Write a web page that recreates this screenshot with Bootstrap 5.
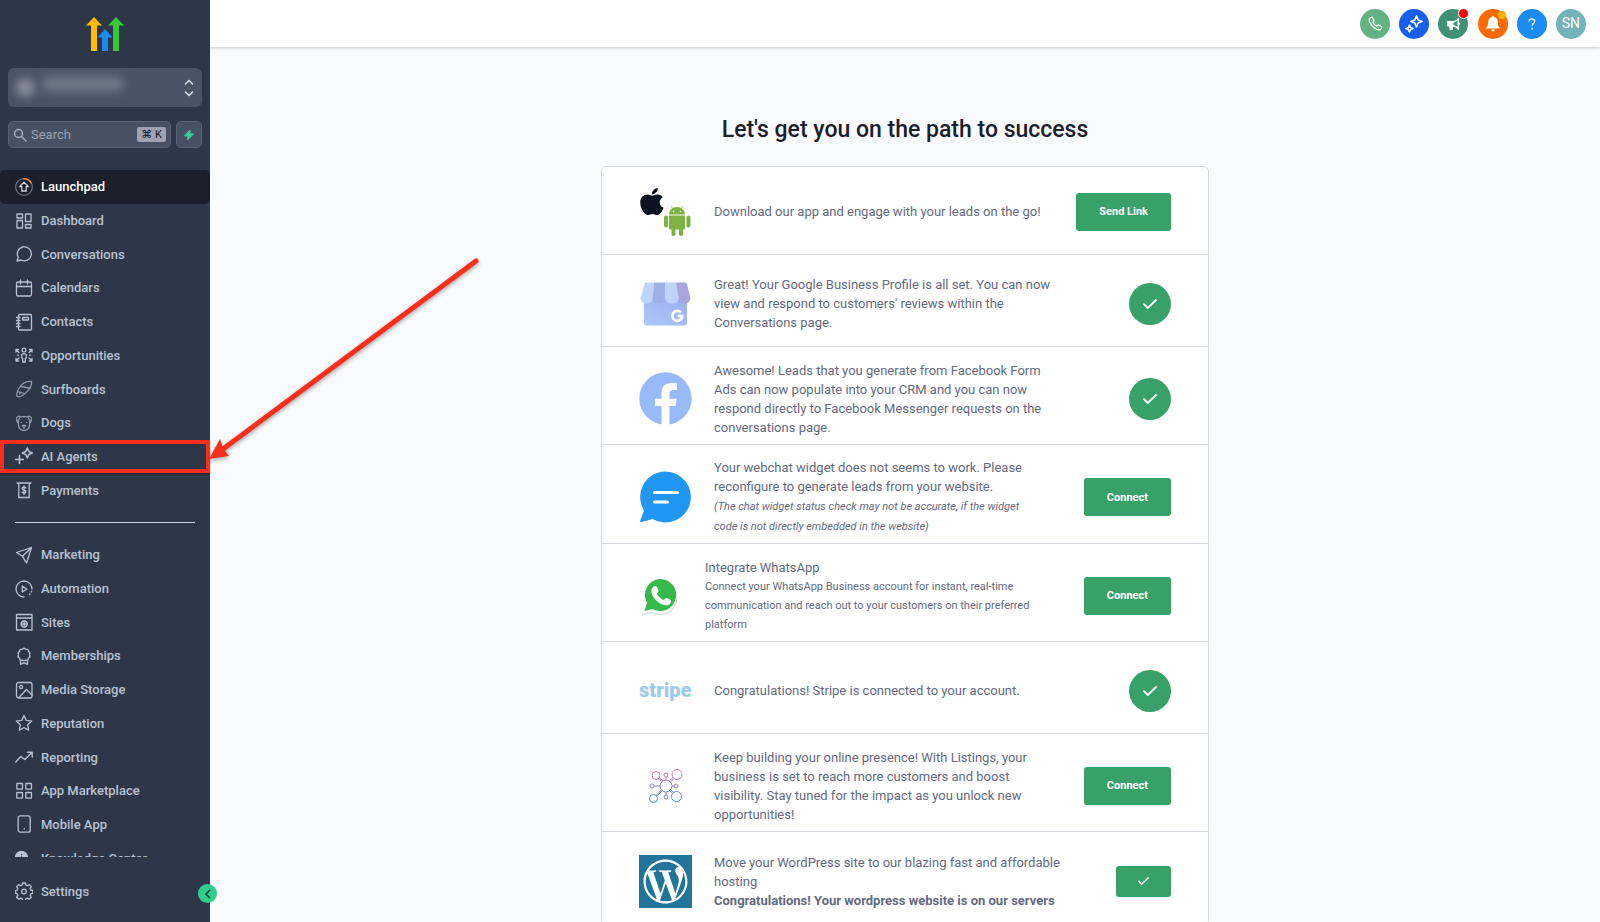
<!DOCTYPE html>
<html lang="en">
<head>
<meta charset="utf-8">
<meta name="viewport" content="width=device-width, initial-scale=1">
<title>Launchpad</title>
<link href="https://cdn.jsdelivr.net/npm/bootstrap@5.3.0/dist/css/bootstrap.min.css" rel="stylesheet">
<style>
  body { font-family: Roboto, "Liberation Sans", sans-serif; font-size: 13px; line-height: 19px; background: #f9fbfd; color: #636a80; }
  svg { display: block; flex: none; }

  /* sidebar */
  .side { width: 210px; flex: none; background: #2d3748; z-index: 10; }
  .brand-row { padding: 17px 0; }
  .account { height: 39px; flex: none; margin: 0 8px; border: 0; border-radius: 6px; background: #4a5464; color: #e2e6ec; padding: 0 8px; }
  .blur-dot { width: 19px; height: 19px; border-radius: 50%; background: #858c97; filter: blur(4px); }
  .blur-line { width: 80px; height: 14px; background: #727a87; filter: blur(5px); }
  .search-row { padding: 0 8px; margin: 14px 0 22px; gap: 5px; }
  .search-box, .bolt { height: 27px; background: #475161; border: 1px solid #596373; border-radius: 5px; }
  .search-box { padding: 0 4px; gap: 4px; min-width: 0; color: #a7afbb; }
  .search-box input { min-width: 0; width: 60px; background: transparent; border: 0; outline: 0; padding: 0; color: #fff; }
  .search-box input::placeholder { color: #9aa3b1; opacity: 1; }
  .search-box kbd { background: #9da4af; color: #10151f; border-radius: 2px; padding: 0 4px; font: 11px/15px Roboto, "DejaVu Sans", sans-serif; white-space: nowrap; }
  .bolt { width: 26px; color: #34d399; padding: 0; }
  .menu { height: 337px; flex: none; }
  .menu li { min-height: 0; }
  .side-link { padding: 0 15px; gap: 8px; color: #b9c3d1; font-weight: 500; text-decoration: none; }
  .side-link:hover { color: #fff; }
  .side-link svg { width: 18px; height: 18px; fill: none; stroke: currentColor; stroke-width: 1.3; stroke-linecap: round; stroke-linejoin: round; }
  .side-link.current { background: #1a202c; color: #fff; border-radius: 5px; }
  .rule { height: 1px; flex: none; margin: 15px; background: #cbd5e0; }
  .side-foot { padding: 17px 0 14px; }
  .side-foot .side-link { height: 34px; }
  .collapse-btn { width: 19px; height: 19px; right: -7px; bottom: 19px; border: 0; border-radius: 50%; background: #2fcf8f; color: #14432f; padding: 0; }
  .marker { inset: 0; border: 4px solid #fa2e1c; box-shadow: 0 1px 2px rgba(0,0,0,.35); pointer-events: none; }
  .pointer-arrow { left: 100%; bottom: 0; pointer-events: none; filter: drop-shadow(0 2px 2px rgba(0,0,0,.35)); }

  /* top bar */
  .topbar { height: 47px; flex: none; background: #fff; box-shadow: 0 1px 3px rgba(0,0,0,.2); padding: 0 14px; z-index: 2; }
  .tools { width: 226px; }
  .tool { width: 30px; height: 30px; border: 0; border-radius: 50%; color: #fff; padding: 0; font-size: 14px; }
  .dot-red { width: 11px; height: 11px; top: -1px; right: -1px; border-radius: 50%; background: #f00; border: 1px solid #fff; }
  .dot-amber { width: 8px; height: 8px; top: 2px; right: 2px; border-radius: 50%; background: #ffb400; }

  /* launchpad */
  .stage { overflow: auto; scrollbar-width: none; }
  .stage::-webkit-scrollbar { display: none; }
  .stage h1 { margin: 68px 0 21px; font-size: 23px; line-height: 30px; font-weight: 500; color: #1a202c; }
  .steps { max-width: 608px; background: #fff; border: 1px solid #d5dae1; border-radius: 5px; }
  .step { min-height: 98px; padding: 7px 37px 1px; border-bottom: 1px solid #d5dae1; gap: 22px; }
  .step.short { min-height: 92px; }
  .step.first { min-height: 88px; padding-top: 3px; }
  .step.tall { min-height: 99px; }
  .step:last-child { border-bottom: 0; }
  .pic { width: 53px; flex: none; }
  .copy { max-width: 342px; }
  .copy.slim { max-width: 325px; }
  .copy.wide { max-width: 356px; }
  .copy.near { margin-left: -9px; }
  .fine { font-size: 11px; }
  .go { background: #38a169; color: #fff; border: 0; border-radius: 3px; font-size: 11px; font-weight: 700; height: 38px; padding: 0 23px; white-space: nowrap; }
  .go.tick { height: 31px; padding: 0 22px; }
  .done { width: 42px; height: 42px; border-radius: 50%; background: #38a169; color: #fff; flex: none; }
  .stripe-word { font-size: 20px; font-weight: 900; color: #9ccbee; }
</style>
</head>
<body>
<div class="d-flex vh-100 overflow-hidden">

  <nav class="side d-flex flex-column position-relative" aria-label="Main">
    <div class="brand-row d-flex justify-content-center">
      <svg width="38" height="34" viewBox="0 0 38 34" role="img" aria-label="Logo">
        <path fill="#ffbc00" d="M8 0l8 8.500h-5V34H5V8.500H0z"/>
        <path fill="#37ca37" d="M30 0l8 8.500h-5V34h-6V8.500h-5z"/>
        <path fill="#188bf6" d="M19 12l7.500 8.500h-4.500V34h-6V20.500h-4.500z"/>
      </svg>
    </div>
    <button class="account d-flex align-items-center gap-2" type="button" aria-label="Switch account">
      <span class="blur-dot"></span><span class="blur-line mb-2"></span>
      <svg class="ms-auto" width="10" height="18" viewBox="0 0 10 18" fill="none" stroke="currentColor" stroke-width="1.400" stroke-linecap="round"><path d="M1.500 5L5 1.500 8.500 5M1.500 13L5 16.500 8.500 13"/></svg>
    </button>
    <div class="search-row d-flex">
      <label class="search-box d-flex align-items-center flex-grow-1">
        <svg width="14" height="14" viewBox="0 0 14 14" fill="none" stroke="currentColor" stroke-width="1.500" stroke-linecap="round"><circle cx="5.500" cy="5.500" r="4"/><path d="M8.500 8.500L13 13"/></svg>
        <input class="flex-grow-1" type="text" placeholder="Search" aria-label="Search">
        <kbd>⌘ K</kbd>
      </label>
      <button class="bolt d-flex align-items-center justify-content-center" type="button" aria-label="Quick actions">
        <svg width="12" height="12" viewBox="0 0 12 12"><path fill="currentColor" stroke="currentColor" stroke-linejoin="round" d="M7 1L1.500 7H5l-.5 4L10.500 5H7z"/></svg>
      </button>
    </div>

    <ul class="menu list-unstyled d-flex flex-column m-0">
      <li class="flex-fill d-flex"><a class="side-link current d-flex align-items-center w-100" href="#"><svg viewBox="0 0 18 18"><circle cx="9" cy="9" r="8.300" stroke="#6b7280"/><path stroke="#ed8936" stroke-width="1.500" d="M9 .7a8.300 8.300 0 0 1 7.200 4.200"/><path d="M9 4.200l4.500 4.500h-2.300V13H6.800V8.700H4.500z" stroke="#cbd5e0"/></svg>Launchpad</a></li>
      <li class="flex-fill d-flex"><a class="side-link d-flex align-items-center w-100" href="#"><svg viewBox="0 0 18 18"><path d="M2 2h5.500v4H2zM2 8.500h5.500V16H2zM10.500 2H16v7.500h-5.500zM10.500 12.500H16V16h-5.500z"/></svg>Dashboard</a></li>
      <li class="flex-fill d-flex"><a class="side-link d-flex align-items-center w-100" href="#"><svg viewBox="0 0 18 18"><path d="M2 16l1.200-3.800A7 7 0 1 1 6 15z"/></svg>Conversations</a></li>
      <li class="flex-fill d-flex"><a class="side-link d-flex align-items-center w-100" href="#"><svg viewBox="0 0 18 18"><rect x="1.500" y="3" width="15" height="14" rx="1.500"/><path d="M1.500 7.500h15M5.500 1v4M12.500 1v4"/></svg>Calendars</a></li>
      <li class="flex-fill d-flex"><a class="side-link d-flex align-items-center w-100" href="#"><svg viewBox="0 0 18 18"><rect x="3.500" y="1.500" width="13" height="15.500" rx="1.200"/><rect x="7.500" y="4.500" width="6" height="2.500" rx=".6"/><path d="M1.500 4.500h3.500M1.500 7.500h3.500M1.500 10.500h3.500M1.500 13.500h3.500"/></svg>Contacts</a></li>
      <li class="flex-fill d-flex"><a class="side-link d-flex align-items-center w-100" href="#"><svg viewBox="0 0 18 18"><circle cx="9" cy="4" r="1.900"/><path d="M6.800 8.500q2.200-1.600 4.400 0v3.500l-.9.500V16H7.700v-3.500l-.9-.5zM1 6V3.500h2.500M1.200 3.700L4 6.500M1 12.500V15h2.500M1.200 14.800L4 12M17 6V3.500h-2.500M16.800 3.700L14 6.500M17 12.500V15h-2.500M16.800 14.800L14 12M2.500 9.200h1M14.500 9.200h1"/></svg>Opportunities</a></li>
      <li class="flex-fill d-flex"><a class="side-link d-flex align-items-center w-100" href="#"><svg viewBox="0 0 18 18" opacity=".7"><path d="M16.500 1.500C10 .5 6 4.500 3.500 9 2 12 .8 15 2.200 16.300c1.600 1.300 4.800-.3 7.800-2.800 5-4 7-8 6.500-12zM5.500 6.500l9 1.500M2.500 11.500l7 2M4.500 13.800l2-1.500"/></svg>Surfboards</a></li>
      <li class="flex-fill d-flex"><a class="side-link d-flex align-items-center w-100" href="#"><svg viewBox="0 0 18 18" opacity=".7"><path d="M5.500 3q3.500-1 7 0M5.500 3C4 1.500 2 2.500 1.500 4.500L2.200 8l1.500 1M12.500 3c1.500-1.500 3.500-.5 4 1.500L15.800 8l-1.500 1M5.500 3L3.500 6v5.500c0 2.500 2.500 5 5.500 5s5.500-2.500 5.500-5V6l-2-3M7.300 11.500L9 13l1.700-1.500zM9 13v1.500"/><path d="M6.300 8.300h.2M11.500 8.300h.2"/></svg>Dogs</a></li>
      <li class="flex-fill d-flex position-relative">
        <a class="side-link d-flex align-items-center w-100" href="#"><svg viewBox="0 0 18 18"><path stroke-width="1.500" d="M12.300 1l1.500 3.500L17.300 6l-3.500 1.500-1.500 3.500-1.500-3.500L7.300 6l3.500-1.500zM4.500 8.500v8M.7 12.500h7.600"/></svg>AI Agents</a>
        <span class="marker position-absolute"></span>
        <svg class="pointer-arrow position-absolute" width="272" height="216" viewBox="0 0 272 216" aria-hidden="true"><path d="M266 4L13 192" stroke="#fa2e1c" stroke-width="5" stroke-linecap="round"/><path fill="#fa2e1c" d="M-1 202L10 182l3 9 6 8z"/></svg>
      </li>
      <li class="flex-fill d-flex"><a class="side-link d-flex align-items-center w-100" href="#"><svg viewBox="0 0 18 18"><path d="M2 2h14M3.800 2v14.500h10.400V2M10.800 6.800q-1.800-1.300-3.200-.3c-1.300 1.200.2 2.300 1.400 2.500 1.500.2 2.600 1.500 1.400 2.600-1.200.8-2.400.4-3.300-.4M9 5v8.500"/></svg>Payments</a></li>
    </ul>
    <div class="rule"></div>
    <div class="flex-grow-1 overflow-hidden">
      <ul class="menu list-unstyled d-flex flex-column m-0">
        <li class="flex-fill d-flex"><a class="side-link d-flex align-items-center w-100" href="#"><svg viewBox="0 0 18 18"><path d="M16.500 1.500L1.500 6.500l6 3.800 4 6.700zM16.500 1.500l-9 8.800"/></svg>Marketing</a></li>
        <li class="flex-fill d-flex"><a class="side-link d-flex align-items-center w-100" href="#"><svg viewBox="0 0 18 18"><path d="M9 17A8 8 0 1 1 17 9M14.500 14.500l.5-.5M16.300 12l.3-.7M7.300 6v6l4.500-3z"/></svg>Automation</a></li>
        <li class="flex-fill d-flex"><a class="side-link d-flex align-items-center w-100" href="#"><svg viewBox="0 0 18 18"><path d="M1.500 1.500h15.500v15.500H1.500zM1.500 5h15.500"/><circle cx="9.200" cy="11" r="3"/><path d="M6.200 11h6M9.200 8v6"/></svg>Sites</a></li>
        <li class="flex-fill d-flex"><a class="side-link d-flex align-items-center w-100" href="#"><svg viewBox="0 0 18 18"><path d="M9 1l1.700 1.200 2.100.1.700 2L15 5.700l-.5 2 .5 2-1.500 1.300-.7 2-2.100.1L9 14l-1.700-.9-2.100-.1-.7-2L3 9.700l.5-2-.5-2 1.500-1.400.7-2 2.100-.1zM5.500 13v4.300L9 15.800l3.500 1.500V13"/></svg>Memberships</a></li>
        <li class="flex-fill d-flex"><a class="side-link d-flex align-items-center w-100" href="#"><svg viewBox="0 0 18 18"><rect x="1.500" y="1.500" width="15.500" height="15.500" rx="2"/><circle cx="6" cy="6" r="1.600"/><path d="M4 16.500l7.500-8 5.500 5.500"/></svg>Media Storage</a></li>
        <li class="flex-fill d-flex"><a class="side-link d-flex align-items-center w-100" href="#"><svg viewBox="0 0 18 18"><path d="M9 1.500l2.300 4.900 5.400.7-4 3.700 1 5.400L9 13.600l-4.700 2.600 1-5.400-4-3.700 5.400-.7z"/></svg>Reputation</a></li>
        <li class="flex-fill d-flex"><a class="side-link d-flex align-items-center w-100" href="#"><svg viewBox="0 0 18 18"><path stroke-width="1.400" d="M.8 14l5-5.500 4 3L17 4.500M12.500 4.300h4.700V9"/></svg>Reporting</a></li>
        <li class="flex-fill d-flex"><a class="side-link d-flex align-items-center w-100" href="#"><svg viewBox="0 0 18 18"><rect x="1.800" y="1.500" width="5.700" height="5.700" rx=".5"/><rect x="10.800" y="1.500" width="5.700" height="5.700" rx=".5"/><rect x="1.800" y="10.500" width="5.700" height="5.700" rx=".5"/><rect x="10.800" y="10.500" width="5.700" height="5.700" rx=".5"/></svg>App Marketplace</a></li>
        <li class="flex-fill d-flex"><a class="side-link d-flex align-items-center w-100" href="#"><svg viewBox="0 0 18 18"><rect x="3.200" y=".8" width="12" height="16.400" rx="2"/><path stroke-width="1.600" d="M9.200 13.800h.1"/></svg>Mobile App</a></li>
        <li class="flex-fill d-flex"><a class="side-link d-flex align-items-center w-100" href="#"><svg viewBox="0 0 18 18"><circle cx="6.500" cy="8.500" r="6" fill="currentColor"/><path stroke="#2d3748" d="M6.500 5.500v.2M6.500 8v4"/></svg>Knowledge Center</a></li>
      </ul>
    </div>
    <div class="side-foot">
      <a class="side-link d-flex align-items-center" href="#"><svg viewBox="0 0 18 18"><path d="M7.600 1h2.800l.5 2.100 1.500.6 1.900-1.100 2 2-1.100 1.900.6 1.500 2 .5v2.800l-2 .5-.6 1.500 1 1.900-2 2-1.800-1.100-1.500.6-.5 2.100H7.600l-.5-2.100-1.500-.6-1.900 1.100-2-2 1.100-1.900-.6-1.500-1.500-.5V8.500l1.500-.5.6-1.500-1.100-1.900 2-2 1.900 1.100 1.500-.6z"/><circle cx="9" cy="9.500" r="2.300"/></svg>Settings</a>
    </div>
    <button class="collapse-btn position-absolute d-flex align-items-center justify-content-center" type="button" aria-label="Collapse sidebar">
      <svg width="6" height="10" viewBox="0 0 6 10" fill="none" stroke="currentColor" stroke-width="1.600"><path d="M5 1L1 5l4 4"/></svg>
    </button>
  </nav>

  <div class="d-flex flex-column flex-grow-1">
    <header class="topbar d-flex align-items-center justify-content-end">
      <div class="tools d-flex justify-content-between">
        <button class="tool d-flex align-items-center justify-content-center" style="background:#63b382" type="button" aria-label="Phone"><svg width="15" height="15" viewBox="0 0 15 15" fill="none" stroke="currentColor" stroke-width="1.200" stroke-linejoin="round"><path d="M2.300 1.800L4 1l2.200 3.600-1.300 1.600c.7 1.700 2 3 3.800 3.900l1.700-1.300 3.600 2.200-.9 1.700c-.7 1.400-2.600 1.400-4.500.6C5.500 11.800 3.200 9.500 1.800 6.300c-.8-1.900-.7-3.700.5-4.500z"/></svg></button>
        <button class="tool d-flex align-items-center justify-content-center" style="background:#155eef" type="button" aria-label="AI assistant"><svg width="18" height="18" viewBox="0 0 18 18" fill="none" stroke="currentColor" stroke-width="1.600" stroke-linejoin="round"><path d="M11.500 1l1.600 3.900L17 6.500l-3.900 1.600-1.600 3.900-1.600-3.900L6 6.500l3.900-1.600zM4.500 10l1 2.500 2.500 1-2.500 1-1 2.500-1-2.500-2.500-1 2.500-1z"/></svg></button>
        <button class="tool position-relative d-flex align-items-center justify-content-center" style="background:#3f9275" type="button" aria-label="Announcements"><svg width="15" height="14" viewBox="0 0 15 14"><path fill="currentColor" fill-rule="evenodd" d="M1 4h6c2 0 4-1.200 5.200-3H13v4.200c1.300.5 1.300 2.600 0 3V13h-.8C11 11 9.500 10 7 9.700V13H3.500V9.600H1.800L1 8.800zm6.500 1.500v2.800c1.600.2 2.900.8 4 1.800V3.500c-1.200 1.100-2.400 1.800-4 2z"/></svg><span class="dot-red position-absolute"></span></button>
        <button class="tool position-relative d-flex align-items-center justify-content-center" style="background:#ff6a00" type="button" aria-label="Notifications"><svg width="14" height="16" viewBox="0 0 14 16"><path fill="currentColor" d="M7 0c.7 0 1 .4 1 1.100 2.500.5 3.800 2.300 3.800 4.900 0 3 .7 4.500 2 5.500V12.500H.2V11.500c1.300-1 2-2.500 2-5.500C2.200 3.400 3.500 1.600 6 1.100 6 .4 6.300 0 7 0zM5.200 13.500h3.600Q8.500 15.500 7 15.500t-1.800-2z"/></svg><span class="dot-amber position-absolute"></span></button>
        <button class="tool d-flex align-items-center justify-content-center" style="background:#188bf6" type="button" aria-label="Help"><svg width="8" height="12" viewBox="0 0 9 14" fill="none" stroke="currentColor" stroke-width="1.600"><path d="M1.200 4C1.200 2 2.500 1 4.500 1s3.200 1.200 3.200 2.900C7.700 6.300 4.600 6.300 4.600 9M4.600 11.500v2"/></svg></button>
        <button class="tool d-flex align-items-center justify-content-center" style="background:#74b3b9" type="button">SN</button>
      </div>
    </header>

    <main class="stage flex-grow-1">
      <h1 class="text-center">Let's get you on the path to success</h1>
      <div class="steps mx-auto">

        <section class="step first d-flex align-items-center">
          <div class="pic"><svg width="53" height="50" viewBox="0 0 53 50">
            <path fill="#0b1220" transform="translate(1 -1) scale(.062 .0605)" d="M318.700 268.700c-.2-36.700 16.400-64.400 50-84.800-18.800-26.900-47.200-41.700-84.700-44.600-35.500-2.800-74.300 20.700-88.500 20.700-15 0-49.400-19.700-76.400-19.700C63.300 141.200 4 184.800 4 273.500q0 39.300 14.400 81.200c12.800 36.700 59 126.700 107.200 125.200 25.200-.6 43-17.900 75.800-17.900 31.800 0 48.300 17.900 76.400 17.900 48.600-.7 90.400-82.500 102.600-119.300-65.200-30.700-61.700-90-61.700-91.900zm-56.600-164.200c27.300-32.400 24.800-61.900 24-72.500-24.100 1.400-52 16.400-67.900 34.900-17.500 19.800-27.800 44.300-25.600 71.900 26.100 2 49.900-11.400 69.500-34.300z"/>
            <g fill="#7cb342"><path d="M30 27.500c0-4.500 3.500-7.500 8-7.500s8 3 8 7.500zM30 28.500h16V41q0 1.500-1.500 1.500h-13Q30 42.500 30 41z"/><rect x="25" y="28.500" width="4" height="12" rx="2"/><rect x="47.500" y="28.500" width="4" height="12" rx="2"/><rect x="32.500" y="40" width="4" height="9" rx="1.800"/><rect x="40" y="40" width="4" height="9" rx="1.800"/><path d="M32 19l2 3M44 19l-2 3" stroke="#7cb342" stroke-width=".7"/></g><circle cx="34.500" cy="24.500" r=".8" fill="#fff"/><circle cx="41.500" cy="24.500" r=".8" fill="#fff"/></svg></div>
          <div class="copy">Download our app and engage with your leads on the go!</div>
          <button class="go ms-auto" type="button">Send Link</button>
        </section>

        <section class="step short d-flex align-items-center">
          <div class="pic"><svg width="53" height="44" viewBox="0 0 53 44">
            <defs><linearGradient id="shop" x1="0" x2="1" y1="1" y2="0"><stop offset="0" stop-color="#a9c8fb"/><stop offset="1" stop-color="#9db0ec"/></linearGradient></defs>
            <path fill="url(#shop)" d="M5 16h43v25q0 2.500-2.500 2.500h-38Q5 43.500 5 41z"/>
            <path fill="#bfd4fb" d="M6 .5h9L13.500 16c0 8-12 7-12 0z"/><path fill="#9fb0e8" d="M15 .5h11.500V16c0 7.500-13 7.500-13 0z"/><path fill="#bfd4fb" d="M26.500.5H37L39.500 16c0 7.500-13 7.500-13 0z"/><path fill="#a8a6dd" d="M37 .5h9Q47.500.5 48 2l3.500 14c0 7-12 8-12 0z"/>
            <path fill="none" stroke="#fff" stroke-width="2.600" d="M42 30.500A5 5 0 1 0 43.300 34H38.500"/></svg></div>
          <div class="copy">Great! Your Google Business Profile is all set. You can now view and respond to customers' reviews within the Conversations page.</div>
          <span class="done ms-auto d-flex align-items-center justify-content-center" role="img" aria-label="Done"><svg width="14" height="10" viewBox="0 0 14 10" fill="none" stroke="currentColor" stroke-width="1.800" stroke-linecap="round"><path d="M1 5.200L4.800 9 13 1"/></svg></span>
        </section>

        <section class="step d-flex align-items-center">
          <div class="pic"><svg width="53" height="53" viewBox="0 0 53 53"><circle cx="26.500" cy="26.500" r="26.200" fill="#98b9fa"/><path fill="#fff" d="M22.500 53V34H16v-7.300h6.500V21c0-6.500 4-10 9.800-10 2.600 0 5.700.5 5.700.5V18h-3.400c-3.200 0-4.100 2-4.100 4v4.700h7.200L36.500 34h-6v19z"/></svg></div>
          <div class="copy">Awesome! Leads that you generate from Facebook Form Ads can now populate into your CRM and you can now respond directly to Facebook Messenger requests on the conversations page.</div>
          <span class="done ms-auto d-flex align-items-center justify-content-center" role="img" aria-label="Done"><svg width="14" height="10" viewBox="0 0 14 10" fill="none" stroke="currentColor" stroke-width="1.800" stroke-linecap="round"><path d="M1 5.200L4.800 9 13 1"/></svg></span>
        </section>

        <section class="step tall d-flex align-items-center">
          <div class="pic"><svg width="53" height="52" viewBox="0 0 53 52"><path fill="#2196f3" d="M26.500.5a25.500 25.500 0 1 1-13 47.500L2 51.300q-1.200 0-.9-1.300L5 39.500A25.500 25.500 0 0 1 26.500.5z"/><path stroke="#fff" stroke-width="3" stroke-linecap="round" d="M15.500 21.500h23M15.500 31h13"/></svg></div>
          <div class="copy slim">Your webchat widget does not seems to work. Please reconfigure to generate leads from your website.<br><em class="fine">(The chat widget status check may not be accurate, if the widget code is not directly embedded in the website)</em></div>
          <button class="go ms-auto" type="button">Connect</button>
        </section>

        <section class="step d-flex align-items-center">
          <div class="pic"><svg width="44" height="40" viewBox="0 0 44 40"><path fill="none" stroke="#c3c8d2" stroke-width=".8" d="M38 22a17 17 0 0 1-25 14.500L3 38.500"/><path fill="#34b94a" d="M21.500 3a16 16 0 1 1-8 30L5.500 35 8 27A16 16 0 0 1 21.500 3z"/><path fill="#fff" d="M15 10.500c1-.8 2.500-.6 3 .5l1.600 3.800c.3 1-1.200 2.200-1.600 3 1.300 3 4 5 6.800 6.200 1-.4 2-2.300 3-1.900l3.900 1.900c1.400.8-.2 4.600-3.200 5.200-3.500.7-8-1.500-11-4.400-3.200-3-5.700-7.200-5-10.500.3-1.700 1.300-3 2.500-3.800z"/></svg></div>
          <div class="copy near">Integrate WhatsApp<br><span class="fine d-block">Connect your WhatsApp Business account for instant, real-time communication and reach out to your customers on their preferred platform</span></div>
          <button class="go ms-auto" type="button">Connect</button>
        </section>

        <section class="step short d-flex align-items-center">
          <div class="pic stripe-word">stripe</div>
          <div class="copy">Congratulations! Stripe is connected to your account.</div>
          <span class="done ms-auto d-flex align-items-center justify-content-center" role="img" aria-label="Done"><svg width="14" height="10" viewBox="0 0 14 10" fill="none" stroke="currentColor" stroke-width="1.800" stroke-linecap="round"><path d="M1 5.200L4.800 9 13 1"/></svg></span>
        </section>

        <section class="step d-flex align-items-center">
          <div class="pic"><svg class="mx-auto" width="34" height="34" viewBox="0 0 34 34" fill="none" stroke="url(#net)" stroke-width="1"><defs><linearGradient id="net" gradientUnits="userSpaceOnUse" x1="17" y1="0" x2="17" y2="34"><stop offset="0" stop-color="#e0789c"/><stop offset=".5" stop-color="#8a7fc6"/><stop offset="1" stop-color="#4a94dc"/></linearGradient></defs><circle cx="17" cy="17" r="6"/><circle cx="7" cy="6.500" r="4"/><circle cx="28" cy="5.500" r="5"/><circle cx="4.500" cy="29.500" r="4"/><circle cx="27.500" cy="27.500" r="5"/><circle cx="17" cy="6" r="2"/><circle cx="3" cy="17" r="2"/><circle cx="27" cy="17" r="2"/><circle cx="17" cy="28" r="2"/><path d="M17 8v3M5 17h6M23 17h2M17 23v3M9 9.800l4.200 2.700M10 9l4 2.700M24 8.700l-3.600 3M25 9.800l-3.500 3M7 26.500l5.500-5.500M8 27.200l5.300-5.500M23.500 24l-3-2.200M24.500 23.200l-3-2.500"/></svg></div>
          <div class="copy">Keep building your online presence! With Listings, your business is set to reach more customers and boost visibility. Stay tuned for the impact as you unlock new opportunities!</div>
          <button class="go ms-auto" type="button">Connect</button>
        </section>

        <section class="step short d-flex align-items-center">
          <div class="pic"><svg width="53" height="53" viewBox="0 0 53 53"><path fill="#21759b" d="M0 0h53v53H0z"/><path fill="#fff" transform="translate(4.500 4.500) scale(1.833)" d="M21.469 6.825c.84 1.537 1.318 3.300 1.318 5.175 0 3.979-2.156 7.456-5.363 9.325l3.295-9.527c.615-1.540.82-2.771.82-3.864 0-.405-.026-.78-.07-1.110m-7.981.105c.647-.03 1.232-.105 1.232-.105.582-.075.514-.93-.067-.899 0 0-1.755.135-2.880.135-1.064 0-2.850-.15-2.850-.15-.585-.03-.661.855-.075.885 0 0 .54.061 1.125.09l1.680 4.605-2.370 7.080L5.354 6.900c.649-.03 1.234-.1 1.234-.1.585-.075.516-.93-.065-.896 0 0-1.746.138-2.874.138-.2 0-.438-.008-.69-.015C4.911 3.150 8.235 1.215 12 1.215c2.809 0 5.365 1.072 7.286 2.833-.046-.003-.091-.009-.141-.009-1.060 0-1.812.923-1.812 1.914 0 .89.513 1.643 1.060 2.531.411.72.89 1.643.89 2.977 0 .915-.354 1.994-.821 3.479l-1.075 3.585-3.900-11.610.001.014zM12 22.784c-1.059 0-2.081-.153-3.048-.437l3.237-9.406 3.315 9.087c.024.053.05.101.078.149-1.120.393-2.325.609-3.582.609M1.211 12c0-1.564.336-3.050.935-4.390L7.290 21.709C3.694 19.960 1.212 16.271 1.211 12M12 0C5.385 0 0 5.385 0 12s5.385 12 12 12 12-5.385 12-12S18.615 0 12 0"/></svg></div>
          <div class="copy wide">Move your WordPress site to our blazing fast and affordable hosting<br><strong>Congratulations! Your wordpress website is on our servers</strong></div>
          <button class="go tick ms-auto" type="button" aria-label="Done"><svg class="mx-auto" width="11" height="8" viewBox="0 0 14 10" fill="none" stroke="currentColor" stroke-width="1.800" stroke-linecap="round"><path d="M1 5.200L4.800 9 13 1"/></svg></button>
        </section>
      </div>
    </main>
  </div>
</div>
<script src="https://cdn.jsdelivr.net/npm/bootstrap@5.3.0/dist/js/bootstrap.bundle.min.js"></script>
</body>
</html>
